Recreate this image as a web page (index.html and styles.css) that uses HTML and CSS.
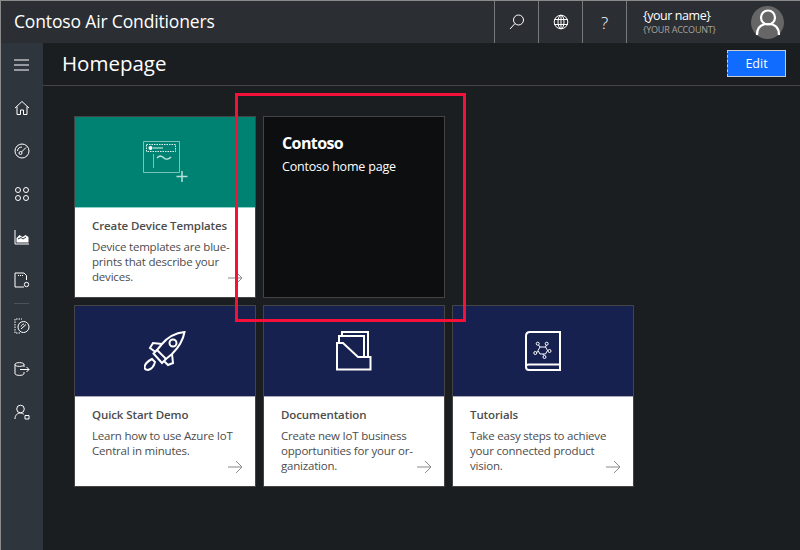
FILE: index.html
```html
<!DOCTYPE html>
<html lang="en">
<head>
    <meta charset="UTF-8">
    <title>Contoso Air Conditioners</title>
    <link rel="stylesheet" href="styles.css">
</head>
<body>
    <div class="app">
        <header class="topbar">
            <div class="brand">Contoso Air Conditioners</div>
            <div class="top-btn">
                <svg width="18" height="18" viewBox="0 0 18 18"><circle cx="10.5" cy="7" r="5" class="ln"/><path d="M7 10.5 2 16" class="ln"/></svg>
            </div>
            <div class="top-btn">
                <svg width="16" height="16" viewBox="0 0 16 16"><circle cx="8" cy="8" r="6.8" class="ln"/><ellipse cx="8" cy="8" rx="3" ry="6.8" class="ln"/><path d="M1.2 5.5h13.6M1.2 10.5h13.6M8 1v14" class="ln"/></svg>
            </div>
            <div class="top-btn help">?</div>
            <div class="user">
                <div class="user-text">
                    <div class="user-name">{your name}</div>
                    <div class="user-acct">{YOUR ACCOUNT}</div>
                </div>
                <div class="avatar">
                    <svg width="26" height="28" viewBox="0 0 26 28"><circle cx="13" cy="9.5" r="7" class="ln2"/><path d="M2 27c0-7 4-11 11-11s11 4 11 11" class="ln2"/></svg>
                </div>
            </div>
        </header>
        <div class="main">
            <nav class="sidebar">
                <div class="nav-item nav-menu">
                    <svg width="16" height="12" viewBox="0 0 16 12"><path d="M0 1h15M0 6h15M0 11h15" class="ln"/></svg>
                </div>
                <div class="nav-item">
                    <svg width="16" height="16" viewBox="0 0 16 16"><path d="M1 8 8 1.500 15 8M3 6.500V14.500h3.500V10h3v4.500H13V6.500" class="ln"/></svg>
                </div>
                <div class="nav-item">
                    <svg width="16" height="16" viewBox="0 0 16 16"><circle cx="8" cy="8" r="7" class="ln"/><circle cx="6.500" cy="10" r="1.500" class="ln"/><path d="M7.500 9 12 4.500M3.500 8C3.500 5 6 4 8 4" class="ln"/></svg>
                </div>
                <div class="nav-item">
                    <svg width="16" height="16" viewBox="0 0 16 16"><circle cx="4" cy="4" r="2.500" class="ln"/><circle cx="12" cy="4" r="2.500" class="ln"/><circle cx="4" cy="12" r="2.500" class="ln"/><circle cx="12" cy="12" r="2.500" class="ln"/></svg>
                </div>
                <div class="nav-item">
                    <svg width="16" height="16" viewBox="0 0 16 16"><path d="M1 1v14h14" class="ln"/><path d="M2.500 13.500V9l3-3 3 2 3-2 3 2v5.500z" fill="#fff"/><path d="M4 10l3-1.500 2 1.500 3-2" stroke="#2f353d" fill="none"/></svg>
                </div>
                <div class="nav-item">
                    <svg width="16" height="16" viewBox="0 0 16 16"><path d="M10 15H1V1h9l2.500 2.500V8" class="ln"/><path d="M4 3.500h5" stroke="#fff" stroke-dasharray="1 1"/><circle cx="12.500" cy="12.500" r="2.200" class="ln"/></svg>
                </div>
                <div class="nav-rule"></div>
                <div class="nav-item">
                    <svg width="16" height="16" viewBox="0 0 16 16"><path d="M6 15H1V1h7" class="ln" stroke-dasharray="1.500 1"/><circle cx="9.500" cy="9" r="5.500" class="ln"/><path d="M7 11l5-4.500M7 8.500C7.500 7 9 6 10 6" class="ln"/></svg>
                </div>
                <div class="nav-item">
                    <svg width="16" height="16" viewBox="0 0 16 16"><path d="M1 3.500C1 1 10 1 10 3.500S1 6 1 3.500zM1 3.500V12.500C1 15 10 15 10 12.500V11M10 3.500V6M6 8.500h9M12.500 6 15 8.500 12.500 11" class="ln"/></svg>
                </div>
                <div class="nav-item">
                    <svg width="16" height="16" viewBox="0 0 16 16"><circle cx="6.500" cy="5" r="3.800" class="ln"/><path d="M1 15c0-3.500 2-6 5.500-6 1.500 0 2.500.5 3.300 1.200" class="ln"/><path d="M11 11.500h4v3.500h-4z" class="ln"/></svg>
                </div>
            </nav>
            <main class="content">
                <div class="page-head">
                    <h1>Homepage</h1>
                    <button class="edit">Edit</button>
                </div>
                <div class="cards">
                    <div class="card">
                        <div class="card-top green">
                            <svg width="52" height="46" viewBox="0 0 52 46" class="faint"><path d="M.500.500h36v31h-36z" stroke="#7cc4ba"/><path d="M3.500 3.500h29v7h-29z" stroke="#e0f4f0" stroke-dasharray="1.500 1"/><path d="M10 7h10" stroke-width="2" stroke="#6fbdb2"/><circle cx="7.500" cy="7" r="2" fill="#fff" stroke="none"/><path d="M10.500 13v14" stroke="#7cc4ba"/><path d="M14 17c3-3 5-2 7 0s5 1 7-1" stroke-width="1.500"/><path d="M39 30v11M33.500 35.500h11" stroke-width="1.500"/></svg>
                        </div>
                        <div class="card-body">
                            <h3>Create Device Templates</h3>
                            <p>Device templates are blue-<br>prints that describe your<br>devices.</p>
                            <svg class="arrow" width="15" height="14" viewBox="0 0 15 14"><path d="M0 7h14M8 1l6 6-6 6"/></svg>
                        </div>
                    </div>
                    <div class="card dark">
                        <h2>Contoso</h2>
                        <p>Contoso home page</p>
                    </div>
                    <div class="card empty"></div>
                    <div class="card">
                        <div class="card-top navy">
                            <svg width="42" height="40" viewBox="0 0 42 40" class="thick"><path d="M40.500 1C31 2 23 7 18 13l-5 6 9 9 6-5c6-6 11-13 12.500-22z"/><circle cx="29" cy="12" r="3.500"/><path d="M13 19l-3.500 3.500L18 32l4-4M18 13 9 12l-3 5 5.500 4M28 23l1 9-5 2-4-4"/><path d="M8 28c-4 2-7 5-7.500 8 0 2.500 1.500 3 3.500 3 4-1 6-4 7-8z"/></svg>
                        </div>
                        <div class="card-body">
                            <h3>Quick Start Demo</h3>
                            <p>Learn how to use Azure IoT<br>Central in minutes.</p>
                            <svg class="arrow" width="15" height="14" viewBox="0 0 15 14"><path d="M0 7h14M8 1l6 6-6 6"/></svg>
                        </div>
                    </div>
                    <div class="card">
                        <div class="card-top navy">
                            <svg width="36" height="40" viewBox="0 0 36 40" class="thick"><path d="M6 5V1h26v25"/><path d="M3 12V5h25v21"/><path d="M1 38.500V12h6l15 14h12.500v12.500z"/></svg>
                        </div>
                        <div class="card-body">
                            <h3>Documentation</h3>
                            <p>Create new IoT business<br>opportunities for your or-<br>ganization.</p>
                            <svg class="arrow" width="15" height="14" viewBox="0 0 15 14"><path d="M0 7h14M8 1l6 6-6 6"/></svg>
                        </div>
                    </div>
                    <div class="card">
                        <div class="card-top navy">
                            <svg width="36" height="40" viewBox="0 0 36 40" class="thick"><path d="M35 1H5C2.500 1 1 2.500 1 5v31c0 2 1.500 3 3 3h31z"/><path d="M1 35.500c0-1.500 1.500-2 3-2h31"/><g class="thin"><path d="M15 16h5.500l2 3.500-2 3.500H15l-2-3.500zM15 16l-1.500-2M20.500 16l1-2M22.500 19.500h.5M18 23l1 1.500M13 20.500l-1.500.8"/><circle cx="12.700" cy="12.700" r="1.500"/><circle cx="21.700" cy="12.700" r="1.500"/><circle cx="24.500" cy="20" r="1.500"/><circle cx="19.500" cy="26" r="1.500"/><circle cx="10.300" cy="22" r="1.500"/></g></svg>
                        </div>
                        <div class="card-body">
                            <h3>Tutorials</h3>
                            <p>Take easy steps to achieve<br>your connected product<br>vision.</p>
                            <svg class="arrow" width="15" height="14" viewBox="0 0 15 14"><path d="M0 7h14M8 1l6 6-6 6"/></svg>
                        </div>
                    </div>
                </div>
                <div class="callout"></div>
            </main>
        </div>
    </div>
</body>
</html>
```

FILE: styles.css
```css
* {
    box-sizing: border-box;
}
html, body {
    margin: 0;
    padding: 0;
}
body {
    font-family: "Open Sans", "Noto Sans", Arial, sans-serif;
    background-color: #1b1e20;
    color: #fff;
}
.app {
    width: 800px;
    height: 550px;
    display: flex;
    flex-direction: column;
    border-top: 1px solid #8a8a8a;
    border-left: 1px solid #8a8a8a;
    overflow: hidden;
}
.ln {
    fill: none;
    stroke: #fff;
    stroke-width: 1;
}
.ln2 {
    fill: none;
    stroke: #fff;
    stroke-width: 2.2;
}
.topbar {
    height: 42px;
    flex: none;
    display: flex;
    background-color: #2b2e33;
}
.brand {
    flex: 1;
    font-size: 17.5px;
    line-height: 41px;
    padding-left: 13px;
    letter-spacing: -0.15px;
}
.top-btn {
    width: 44px;
    border-left: 1px solid #77797c;
    display: flex;
    align-items: center;
    justify-content: center;
}
.help {
    font-size: 17px;
    font-weight: 300;
}
.user {
    width: 174px;
    border-left: 1px solid #77797c;
    display: flex;
    align-items: center;
    justify-content: space-between;
    padding: 0 16px 0 16px;
}
.user-name {
    font-size: 12.5px;
    line-height: 15px;
    letter-spacing: -0.45px;
}
.user-acct {
    font-size: 9px;
    line-height: 13px;
    color: #a8a49c;
    letter-spacing: -0.2px;
}
.avatar {
    width: 33px;
    height: 33px;
    border-radius: 50%;
    background-color: #666;
    display: flex;
    align-items: flex-end;
    justify-content: center;
    padding-bottom: 3px;
}
.main {
    flex: 1;
    display: flex;
}
.sidebar {
    width: 42px;
    flex: none;
    background-color: #2f353d;
    display: flex;
    flex-direction: column;
    align-items: center;
    padding-top: 1px;
}
.nav-item {
    height: 43px;
    width: 100%;
    flex: none;
    display: flex;
    align-items: center;
    justify-content: center;
    padding-right: 1px;
}
.nav-menu {
    height: 42px;
}
.nav-rule {
    width: 15px;
    height: 1px;
    background-color: #4d535b;
    margin: 2px 0 0 -1px;
}
.content {
    flex: 1;
    position: relative;
}
.page-head {
    height: 43px;
    display: flex;
    align-items: center;
    justify-content: space-between;
    padding: 0 14px 2px 19px;
    border-bottom: 1px solid #444;
}
.page-head h1 {
    margin: 0;
    font-size: 20.5px;
    font-weight: 400;
}
.edit {
    width: 59px;
    height: 27px;
    font-family: inherit;
    font-size: 12.5px;
    color: #fff;
    background-color: #0f6cff;
    border: 1px solid #c8ccd0;
    border-left: 1px dashed #c8ccd0;
    padding: 0;
}
.cards {
    display: grid;
    grid-template-columns: repeat(3, 182px);
    grid-auto-rows: 182px;
    gap: 7px;
    padding: 30px 0 0 31px;
}
.card {
    display: flex;
    flex-direction: column;
    background-color: #fff;
    border: 1px solid #444;
}
.card-top {
    height: 91px;
    flex: none;
    display: flex;
    align-items: center;
    justify-content: center;
}
.green {
    background-color: #008272;
    border-bottom: 1px solid #8fd0c8;
    padding-right: 1px;
}
.navy {
    background-color: #16214f;
    border-bottom: 1px solid #aab;
}
.faint {
    fill: none;
    stroke: #b5e0da;
    stroke-width: 1;
    margin: 3px 0 0 9px;
}
.thick {
    fill: none;
    stroke: #fff;
    stroke-width: 2;
}
.thin {
    stroke-width: 1;
}
.card-body {
    flex: 1;
    position: relative;
    padding: 9px 17px 0 17px;
    color: #4c4c4c;
}
.card-body h3 {
    margin: 0 0 5px;
    font-size: 11.5px;
    line-height: 17px;
    font-weight: 600;
    letter-spacing: -0.1px;
}
.card-body p {
    margin: 0;
    font-size: 11.5px;
    line-height: 15px;
    letter-spacing: -0.2px;
    white-space: nowrap;
}
.arrow {
    position: absolute;
    right: 12px;
    bottom: 12px;
    fill: none;
    stroke: #8a8a8a;
    stroke-width: 1;
}
.dark {
    background-color: #0c0e10;
    padding: 16px 18px;
}
.dark h2 {
    margin: 0;
    font-size: 16px;
    line-height: 20px;
    font-weight: 700;
    letter-spacing: -0.6px;
}
.dark p {
    margin: 6px 0 0;
    font-size: 12.5px;
    line-height: 16px;
    letter-spacing: -0.2px;
}
.empty {
    visibility: hidden;
}
.callout {
    position: absolute;
    left: 192px;
    top: 50px;
    width: 231px;
    height: 229px;
    border: 3px solid #f5103a;
}
```
